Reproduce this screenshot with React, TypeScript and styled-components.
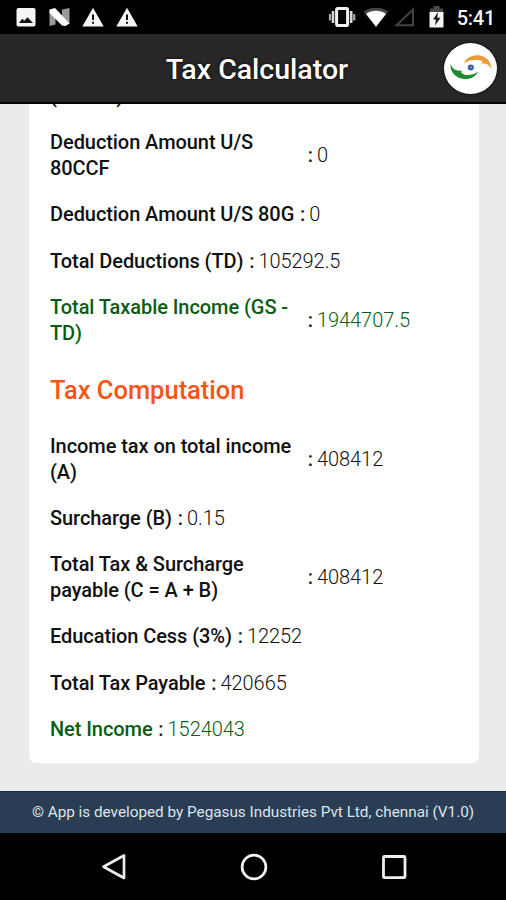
import React from "react";
import styled, { createGlobalStyle } from "styled-components";

const GlobalStyle = createGlobalStyle`
  * { box-sizing: border-box; }
  body { margin: 0; background: #000; font-family: Roboto, sans-serif; }
  svg { display: block; flex: none; }
`;

const Screen = styled.div`
  display: flex;
  flex-direction: column;
  width: 506px;
  height: 900px;
  overflow: hidden;
  background: #000;
`;

const StatusBar = styled.div`
  display: flex;
  align-items: center;
  justify-content: space-between;
  height: 34px;
  padding: 0 11px 0 15px;
  flex: none;
`;

const IconGroup = styled.div`
  display: flex;
  align-items: center;
`;

const Clock = styled.span`
  margin-left: 13px;
  padding-top: 2px;
  color: #f2f2f2;
  font-size: 20px;
  font-weight: 500;
  line-height: 22px;
  letter-spacing: -0.25px;
`;

const Header = styled.header`
  display: grid;
  grid-template-columns: 62px 1fr 62px;
  align-items: center;
  height: 70px;
  flex: none;
  background: #282627;
  border-bottom: 2px solid #050505;
`;

const Title = styled.h1`
  grid-column: 2;
  margin: 0;
  padding-top: 3px;
  padding-left: 8px;
  color: #fff;
  text-align: center;
  font-size: 28.5px;
  font-weight: 500;
  line-height: 36px;
  text-shadow: 0 0 3px #000;
`;

const LogoBadge = styled.div`
  width: 53px;
  height: 51px;
  margin-top: 1px;
  border-radius: 50%;
  background: #fff;
  box-shadow: 0 0 3px #000;
`;

const Content = styled.main`
  display: flex;
  flex-direction: column;
  justify-content: flex-end;
  height: 687px;
  flex: none;
  padding: 0 27px 28px 29px;
  background: #ebebeb;
  overflow: hidden;
`;

const Card = styled.section`
  display: flex;
  flex-direction: column;
  gap: 21.05px;
  padding: 21px 21px 20.4px;
  border-radius: 0 0 7px 7px;
  background: #fff;
`;

const Row = styled.div<{ $green?: boolean }>`
  display: flex;
  align-items: center;
  color: ${(p) => (p.$green ? "#0b5c12" : "#111")};
  font-size: 20px;
  line-height: 25.4px;
  letter-spacing: -0.07px;
`;

const Label = styled.span`
  max-width: 252px;
  font-weight: 500;
`;

const Colon = styled.span`
  margin: 0 4px 0 5.8px;
  color: #222;
  font-weight: 500;
`;

const Value = styled.span`
  font-weight: 300;
`;

const SectionTitle = styled.h2`
  margin: 0;
  color: #fb5414;
  font-size: 25.5px;
  font-weight: 500;
  line-height: 46px;
`;

const Footer = styled.footer`
  display: flex;
  align-items: center;
  justify-content: center;
  height: 42px;
  flex: none;
  padding-bottom: 1px;
  border-top: 1px solid #172c48;
  background: #293e54;
  color: #dfe3e9;
  font-size: 15.3px;
  line-height: 20px;
  letter-spacing: -0.01px;
  white-space: nowrap;
`;

const NavBar = styled.nav`
  display: flex;
  align-items: center;
  justify-content: center;
  gap: 110px;
  flex: 1;
  padding-left: 1px;
`;

const PictureIcon = () => (
  <svg width="21" height="20" viewBox="0 0 21 20">
    <rect x="1.5" y="1" width="19" height="18.5" rx="2" fill="#f5f5f5" />
    <path d="M4 16l3.300-4.200 2 2 3.100-3.600 5.600 5.800z" fill="#111" />
  </svg>
);

const NougatIcon = () => (
  <svg width="22" height="20" viewBox="0 0 22 20">
    <path d="M1.500 4l6 5v8.500l-6 1.500zM14 2.500 21.500 1V17l-7.500-5z" fill="#9a9a9a" />
    <path d="M1.500 2.500 7 1l14.500 15.500-4 2.500-3.500-.5L1.500 6z" fill="#fff" />
  </svg>
);

const WarningIcon = () => (
  <svg width="22" height="20" viewBox="0 0 22 20">
    <path d="M11 .8 21.700 19.500H.3z" fill="#f5f5f5" />
    <path d="M10 7.500h2v5.500h-2zM10 14.700h2v2.100h-2z" fill="#111" />
  </svg>
);

const VibrateIcon = () => (
  <svg width="28" height="20" viewBox="0 0 28 20">
    <rect x="8.600" y="1.600" width="11" height="17" rx="1" fill="none" stroke="#f0f0f0" strokeWidth="3" />
    <path d="M5 4v12M23.200 4v12" stroke="#d8d8d8" strokeWidth="2.600" />
    <path d="M2 7v6.500M26.200 7v6.500" stroke="#a8a8a8" strokeWidth="2.200" />
  </svg>
);

const WifiIcon = () => (
  <svg width="26" height="20" viewBox="0 0 26 20">
    <path d="M13 19.700.5 4.500C8-.6 18-.6 25.500 4.500z" fill="#474747" />
    <path d="M13 19.700 3 7c5.800-4.300 14.200-4.300 20 0z" fill="#fff" />
  </svg>
);

const SignalIcon = () => (
  <svg width="21" height="20" viewBox="0 0 21 20">
    <path d="M19 2.500V18.200H2.500z" fill="none" stroke="#444" strokeWidth="2" />
  </svg>
);

const BatteryIcon = () => (
  <svg width="15" height="22" viewBox="0 0 15 22">
    <path d="M4.500 0h6v2.500H14V6H1V2.500h3.500z" fill="#484848" />
    <path d="M.5 6h14v15.500H.5z" fill="#f5f5f5" />
    <path d="M9 6 4 13.500h3l-1 6 5.500-7.800H8.200z" fill="#151515" />
  </svg>
);

const CompanyLogo = () => (
  <svg width="53" height="51" viewBox="0 0 53 51">
    <path d="M19.800 20C23 14 30 11 37 12.700c6 1.600 10 6.300 10.600 13.300-3.200-5.400-7.100-6.500-10.600-4.700 1.500-1.800 1.800-2.500 1.200-3.300-5.600-2.400-12-1.600-18.400 2z" fill="#ed9830" />
    <path d="M6.700 20.500c1.500 5.700 5.800 8 12 7l-1.700 1.500c2.200 4.300 10.500 4 17.200-.2C31.500 34 26 36.800 19.500 36 11 34.600 5.500 28.600 6.700 20.500z" fill="#218a32" />
    <circle cx="26.800" cy="24.500" r="3" fill="#345c9c" />
    <circle cx="27" cy="24.400" r="1.100" fill="#7f9dcc" />
  </svg>
);

const BackIcon = () => (
  <svg width="30" height="30" viewBox="0 0 30 30">
    <path d="M25 3.500v22.500L4.500 14.700z" fill="none" stroke="#eee" strokeWidth="2.700" strokeLinejoin="round" />
  </svg>
);

const HomeIcon = () => (
  <svg width="30" height="30" viewBox="0 0 30 30">
    <circle cx="15" cy="15" r="11.900" fill="none" stroke="#f2f2f2" strokeWidth="2.700" />
  </svg>
);

const RecentsIcon = () => (
  <svg width="30" height="30" viewBox="0 0 30 30">
    <rect x="4.500" y="4.500" width="21.500" height="21.200" rx="1" fill="none" stroke="#eee" strokeWidth="2.800" />
  </svg>
);

const StatusIcons = styled(IconGroup)`
  gap: 12px;
`;

const SystemIcons = styled(IconGroup)`
  & > svg:nth-of-type(1) { margin-right: 7px; }
  & > svg:nth-of-type(2) { margin-right: 5px; }
  & > svg:nth-of-type(3) { margin-right: 14px; }
`;

type Entry = { label: string; value?: string; green?: boolean };

const deductions: Entry[] = [
  { label: "(80CCF)" },
  { label: "Deduction Amount U/S 80CCF", value: "0" },
  { label: "Deduction Amount U/S 80G", value: "0" },
  { label: "Total Deductions (TD)", value: "105292.5" },
  { label: "Total Taxable Income (GS - TD)", value: "1944707.5", green: true },
];

const computation: Entry[] = [
  { label: "Income tax on total income (A)", value: "408412" },
  { label: "Surcharge (B)", value: "0.15" },
  { label: "Total Tax & Surcharge payable (C = A + B)", value: "408412" },
  { label: "Education Cess (3%)", value: "12252" },
  { label: "Total Tax Payable", value: "420665" },
  { label: "Net Income", value: "1524043", green: true },
];

const AmountRow = ({ label, value, green }: Entry) => (
  <Row $green={green}>
    <Label>{label}</Label>
    {value !== undefined && (
      <>
        <Colon>:</Colon>
        <Value>{value}</Value>
      </>
    )}
  </Row>
);

export default function App() {
  return (
    <Screen>
      <GlobalStyle />
      <StatusBar>
        <StatusIcons>
          <PictureIcon />
          <NougatIcon />
          <WarningIcon />
          <WarningIcon />
        </StatusIcons>
        <SystemIcons>
          <VibrateIcon />
          <WifiIcon />
          <SignalIcon />
          <BatteryIcon />
          <Clock>5:41</Clock>
        </SystemIcons>
      </StatusBar>
      <Header>
        <Title>Tax Calculator</Title>
        <LogoBadge>
          <CompanyLogo />
        </LogoBadge>
      </Header>
      <Content>
        <Card>
          {deductions.map((entry) => (
            <AmountRow key={entry.label} {...entry} />
          ))}
          <SectionTitle>Tax Computation</SectionTitle>
          {computation.map((entry) => (
            <AmountRow key={entry.label} {...entry} />
          ))}
        </Card>
      </Content>
      <Footer>© App is developed by Pegasus Industries Pvt Ltd, chennai (V1.0)</Footer>
      <NavBar>
        <BackIcon />
        <HomeIcon />
        <RecentsIcon />
      </NavBar>
    </Screen>
  );
}
